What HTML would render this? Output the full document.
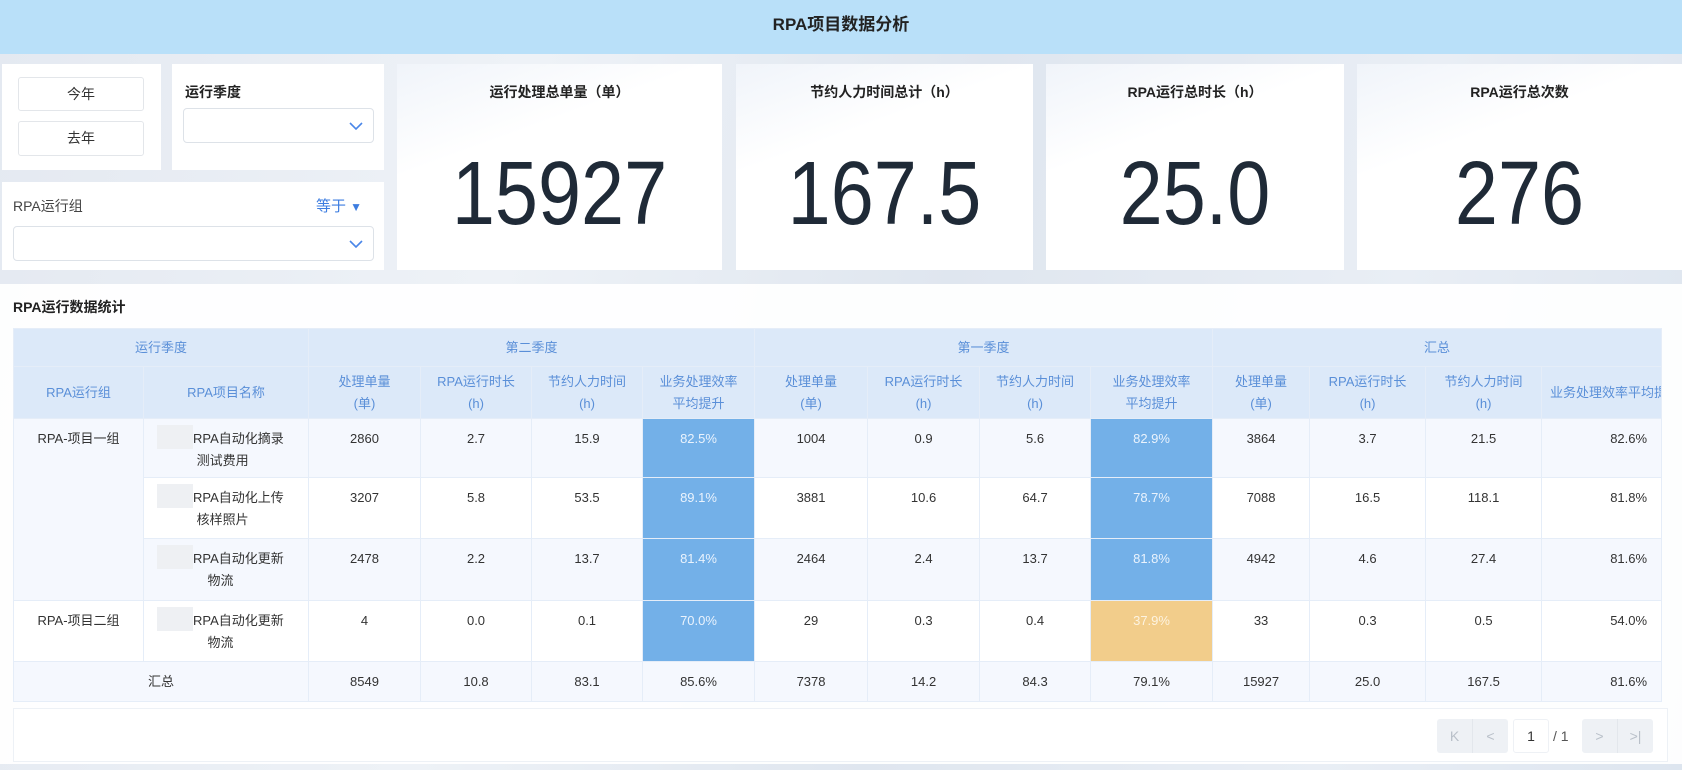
<!DOCTYPE html>
<html><head><meta charset="utf-8">
<style>
*{box-sizing:border-box;margin:0;padding:0}
body{width:1682px;height:770px;overflow:hidden;font-family:"Liberation Sans","Noto Sans CJK SC",sans-serif;color:#333;position:relative;
background:linear-gradient(100deg,#e4e9f1 0%,#eef2f7 30%,#dfe6ef 55%,#e9eef5 80%,#dde5ef 100%);}
.abs{position:absolute}
.title{left:0;top:0;width:1682px;height:54px;background:#b9e0f9;text-align:center;line-height:50px;font-size:17px;font-weight:bold;color:#222}
.box{background:#fff}
.btn{position:absolute;border:1px solid #e3e6ea;border-radius:3px;background:#fff;text-align:center;font-size:14px;color:#333;line-height:32px}
.sel{position:absolute;border:1px solid #dde2e8;border-radius:4px;background:#fff}
.sel svg{position:absolute;right:10px;top:50%;margin-top:-4px}
.lbl{position:absolute;font-size:14px;font-weight:bold;color:#222}
.card{position:absolute;top:64px;height:206px;background:linear-gradient(160deg,#f0f4fa 0%,#fff 35%,#fff 100%);text-align:center}
.card .h{position:absolute;left:0;right:0;top:18px;font-size:14px;font-weight:bold;color:#222}
.card .n{position:absolute;left:0;right:0;top:80px;font-size:90px;line-height:100px;color:#1f2a37;transform:scaleX(0.86)}
.panel{left:0;top:284px;width:1682px;height:480px;background:rgba(255,255,255,0.93)}
table{position:absolute;left:13px;top:328px;border-collapse:collapse;table-layout:fixed;width:1648px;font-size:13px}
td,th{border:1px solid #e5edf8;text-align:center;overflow:hidden;white-space:nowrap}
th{background:#dce9f9;color:#5a8fd8;font-weight:normal;line-height:22px}
td{vertical-align:top;padding-top:9px;line-height:22px;color:#333}
tr.a td{background:#f5f8fe}
tr.b td{background:#fff}
td.bl{background:#73b0e8 !important;color:#eaf3fd}
td.or{background:#f2cd8b !important;color:#fdf3e0}
td.nm{text-align:left;padding-left:49px;position:relative;white-space:normal;padding-right:24px}
td.nm:before{content:"";position:absolute;left:13px;top:6px;width:36px;height:24px;background:#eef0f3}
td.r{text-align:right;padding-right:14px}
.pg{position:absolute;top:719px;height:34px;background:#eef1f5;border-radius:3px;color:#b9c0c9;font-size:14px;line-height:34px;text-align:center}
</style></head><body>
<div class="abs title">RPA项目数据分析</div>

<div class="abs box" style="left:2px;top:64px;width:159px;height:106px"></div>
<div class="btn" style="left:18px;top:77px;width:126px;height:34px">今年</div>
<div class="btn" style="left:18px;top:121px;width:126px;height:35px">去年</div>

<div class="abs box" style="left:172px;top:64px;width:212px;height:106px"></div>
<div class="lbl" style="left:185px;top:82px">运行季度</div>
<div class="sel" style="left:183px;top:108px;width:191px;height:35px"><svg width="14" height="8"><path d="M1 1 L7 7 L13 1" fill="none" stroke="#4a86e8" stroke-width="1.6"/></svg></div>

<div class="abs box" style="left:2px;top:182px;width:382px;height:88px"></div>
<div class="abs" style="left:13px;top:196px;font-size:14px;color:#444">RPA运行组</div>
<div class="abs" style="left:316px;top:195px;font-size:15px;color:#3d7de0">等于 <span style="font-size:12px">▼</span></div>
<div class="sel" style="left:13px;top:226px;width:361px;height:35px"><svg width="14" height="8"><path d="M1 1 L7 7 L13 1" fill="none" stroke="#4a86e8" stroke-width="1.6"/></svg></div>

<div class="card" style="left:397px;width:325px"><div class="h">运行处理总单量（单）</div><div class="n">15927</div></div>
<div class="card" style="left:736px;width:297px"><div class="h">节约人力时间总计（h）</div><div class="n">167.5</div></div>
<div class="card" style="left:1046px;width:298px"><div class="h">RPA运行总时长（h）</div><div class="n">25.0</div></div>
<div class="card" style="left:1357px;width:325px"><div class="h">RPA运行总次数</div><div class="n">276</div></div>

<div class="abs panel"></div>
<div class="abs" style="left:13px;top:297px;font-size:14px;font-weight:bold;color:#222">RPA运行数据统计</div>

<table>
<colgroup><col style="width:130px"><col style="width:165px"><col style="width:112px"><col style="width:111px"><col style="width:111px"><col style="width:112px"><col style="width:113px"><col style="width:112px"><col style="width:111px"><col style="width:122px"><col style="width:97px"><col style="width:116px"><col style="width:116px"><col style="width:120px"></colgroup>
<tr style="height:38px"><th colspan="2">运行季度</th><th colspan="4">第二季度</th><th colspan="4">第一季度</th><th colspan="4">汇总</th></tr>
<tr style="height:52px"><th>RPA运行组</th><th>RPA项目名称</th><th>处理单量<br>(单)</th><th>RPA运行时长<br>(h)</th><th>节约人力时间<br>(h)</th><th>业务处理效率<br>平均提升</th><th>处理单量<br>(单)</th><th>RPA运行时长<br>(h)</th><th>节约人力时间<br>(h)</th><th>业务处理效率<br>平均提升</th><th>处理单量<br>(单)</th><th>RPA运行时长<br>(h)</th><th>节约人力时间<br>(h)</th><th style="text-align:left;padding-left:8px">业务处理效率平均提升</th></tr>
<tr class="a" style="height:59px"><td rowspan="3" style="background:#f5f8fe">RPA-项目一组</td><td class="nm">RPA自动化摘录<br>&nbsp;测试费用</td><td>2860</td><td>2.7</td><td>15.9</td><td class="bl">82.5%</td><td>1004</td><td>0.9</td><td>5.6</td><td class="bl">82.9%</td><td>3864</td><td>3.7</td><td>21.5</td><td class="r">82.6%</td></tr>
<tr class="b" style="height:61px"><td class="nm">RPA自动化上传<br>&nbsp;核样照片</td><td>3207</td><td>5.8</td><td>53.5</td><td class="bl">89.1%</td><td>3881</td><td>10.6</td><td>64.7</td><td class="bl">78.7%</td><td>7088</td><td>16.5</td><td>118.1</td><td class="r">81.8%</td></tr>
<tr class="a" style="height:62px"><td class="nm">RPA自动化更新<br>&nbsp;&nbsp;&nbsp;&nbsp;物流</td><td>2478</td><td>2.2</td><td>13.7</td><td class="bl">81.4%</td><td>2464</td><td>2.4</td><td>13.7</td><td class="bl">81.8%</td><td>4942</td><td>4.6</td><td>27.4</td><td class="r">81.6%</td></tr>
<tr class="b" style="height:61px"><td>RPA-项目二组</td><td class="nm">RPA自动化更新<br>&nbsp;&nbsp;&nbsp;&nbsp;物流</td><td>4</td><td>0.0</td><td>0.1</td><td class="bl">70.0%</td><td>29</td><td>0.3</td><td>0.4</td><td class="or">37.9%</td><td>33</td><td>0.3</td><td>0.5</td><td class="r">54.0%</td></tr>
<tr class="a" style="height:40px"><td colspan="2" style="vertical-align:middle;padding:0">汇总</td><td style="vertical-align:middle;padding:0">8549</td><td style="vertical-align:middle;padding:0">10.8</td><td style="vertical-align:middle;padding:0">83.1</td><td style="vertical-align:middle;padding:0">85.6%</td><td style="vertical-align:middle;padding:0">7378</td><td style="vertical-align:middle;padding:0">14.2</td><td style="vertical-align:middle;padding:0">84.3</td><td style="vertical-align:middle;padding:0">79.1%</td><td style="vertical-align:middle;padding:0">15927</td><td style="vertical-align:middle;padding:0">25.0</td><td style="vertical-align:middle;padding:0">167.5</td><td class="r" style="vertical-align:middle;padding-top:0">81.6%</td></tr>
</table>

<div class="abs" style="left:13px;top:708px;width:1655px;height:54px;border:1px solid #edf1f6;background:#fff"></div>
<div class="pg" style="left:1437px;width:71px"><span style="position:absolute;left:0;width:35px">K</span><span style="position:absolute;left:35px;width:36px;border-left:1px solid #e3e7ec">&lt;</span></div>
<div class="abs" style="left:1513px;top:719px;width:36px;height:34px;background:#fff;border:1px solid #eef1f5;border-radius:3px;text-align:center;line-height:32px;font-size:14px;color:#333">1</div>
<div class="abs" style="left:1553px;top:719px;line-height:34px;font-size:14px;color:#555">/ 1</div>
<div class="pg" style="left:1582px;width:71px"><span style="position:absolute;left:0;width:35px">&gt;</span><span style="position:absolute;left:35px;width:36px;border-left:1px solid #e3e7ec">&gt;|</span></div>
</body></html>
